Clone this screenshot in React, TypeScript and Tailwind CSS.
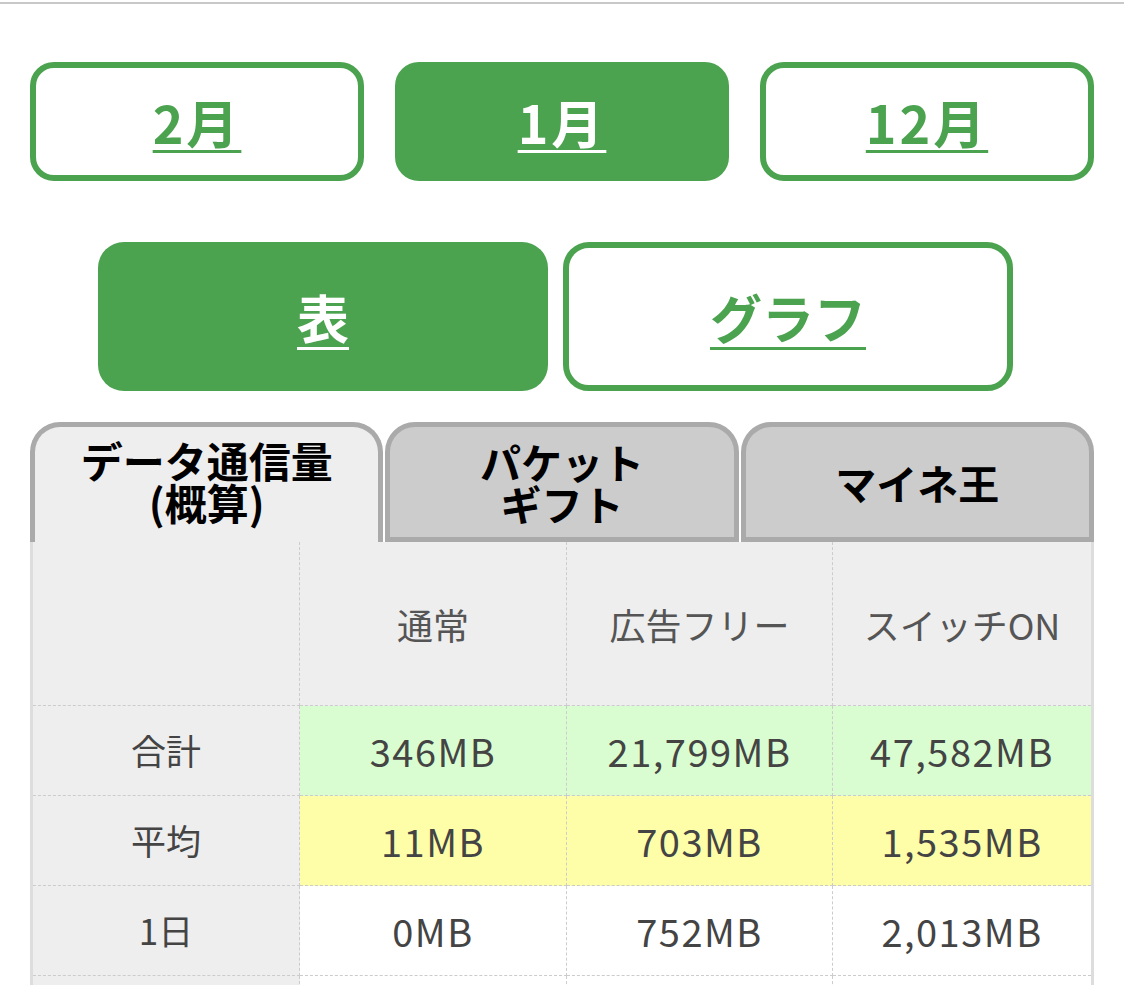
import React from 'react';

const font = { fontFamily: '"Noto Sans CJK JP", "Noto Sans", sans-serif' };

const months = [
  { label: '2月', active: false },
  { label: '1月', active: true },
  { label: '12月', active: false },
];

const rows = [
  { label: '合計', values: ['346MB', '21,799MB', '47,582MB'], bg: 'bg-[#d9fdd0]' },
  { label: '平均', values: ['11MB', '703MB', '1,535MB'], bg: 'bg-[#fefea9]' },
  { label: '1日', values: ['0MB', '752MB', '2,013MB'], bg: 'bg-white' },
  { label: '2日', values: ['0MB', '688MB', '1,874MB'], bg: 'bg-white' },
];

export default function App() {
  return (
    <div className="w-[1124px] bg-white pb-10" style={font}>
      {/* top rule */}
      <div className="mt-[2px] h-[2px] bg-[#c8c8c8]" />

      {/* Month selector */}
      <div className="mt-[58px] flex gap-[31px] px-[30px]">
        {months.map((m) => (
          <button
            key={m.label}
            className={`h-[119px] w-[334px] rounded-[24px] border-[6px] border-[#4ba24f] text-[52px] leading-[60px] tracking-[3px] font-bold underline underline-offset-[6px] decoration-[3px] ${
              m.active ? 'bg-[#4ba24f] text-white' : 'bg-white text-[#4ba24f]'
            }`}
          >
            {m.label}
          </button>
        ))}
      </div>

      {/* View switch */}
      <div className="mt-[61px] flex gap-[15px] pl-[98px]">
        <button className="h-[149px] w-[450px] rounded-[26px] bg-[#4ba24f] text-[52px] font-bold text-white underline underline-offset-[8px] decoration-[3px]">
          表
        </button>
        <button className="h-[149px] w-[450px] rounded-[26px] border-[6px] border-[#4ba24f] bg-white text-[52px] font-bold text-[#4ba24f] underline underline-offset-[8px] decoration-[3px]">
          グラフ
        </button>
      </div>

      {/* Tabs */}
      <div className="mx-[30px] mt-[31px] grid grid-cols-3 gap-[2px]">
        <div className="flex h-[120px] flex-col items-center justify-center rounded-t-[30px] border-[5px] border-b-0 border-[#aaaaaa] bg-[#eeeeee] pb-2 text-[42px] leading-[42px] font-bold text-black">
          <span>データ通信量</span>
          <span>(概算)</span>
        </div>
        <div className="flex h-[120px] flex-col items-center justify-center rounded-t-[30px] border-[5px] border-[#aaaaaa] bg-[#cccccc] text-[41px] leading-[42px] font-bold text-black">
          <span>パケット</span>
          <span>ギフト</span>
        </div>
        <div className="flex h-[120px] items-center justify-center rounded-t-[30px] border-[5px] border-[#aaaaaa] bg-[#cccccc] text-[41px] leading-[42px] font-bold text-black">
          マイネ王
        </div>
      </div>

      {/* Table */}
      <div className="mx-[30px] grid grid-cols-[267px_267px_266px_1fr] border-x-[3px] border-[#dddddd] text-[38px] tracking-[1.5px] text-[#444444]">
        <div className="h-[164px] border-b border-r border-dashed border-[#cccccc] bg-[#eeeeee]" />
        {['通常', '広告フリー', 'スイッチON'].map((h, i) => (
          <div
            key={h}
            className={`flex h-[164px] items-center justify-center border-b border-dashed border-[#cccccc] bg-[#eeeeee] text-[36px] tracking-normal text-[#555555] ${
              i < 2 ? 'border-r' : ''
            }`}
          >
            {h}
          </div>
        ))}
        {rows.map((r) => (
          <React.Fragment key={r.label}>
            <div className="flex h-[90px] items-center justify-center border-b border-r border-dashed border-[#cccccc] bg-[#eeeeee] text-[35px] tracking-normal">
              {r.label}
            </div>
            {r.values.map((v, i) => (
              <div
                key={i}
                className={`flex h-[90px] items-center justify-center border-b border-dashed border-[#cccccc] ${r.bg} ${
                  i < 2 ? 'border-r' : ''
                }`}
              >
                {v}
              </div>
            ))}
          </React.Fragment>
        ))}
      </div>
    </div>
  );
}
